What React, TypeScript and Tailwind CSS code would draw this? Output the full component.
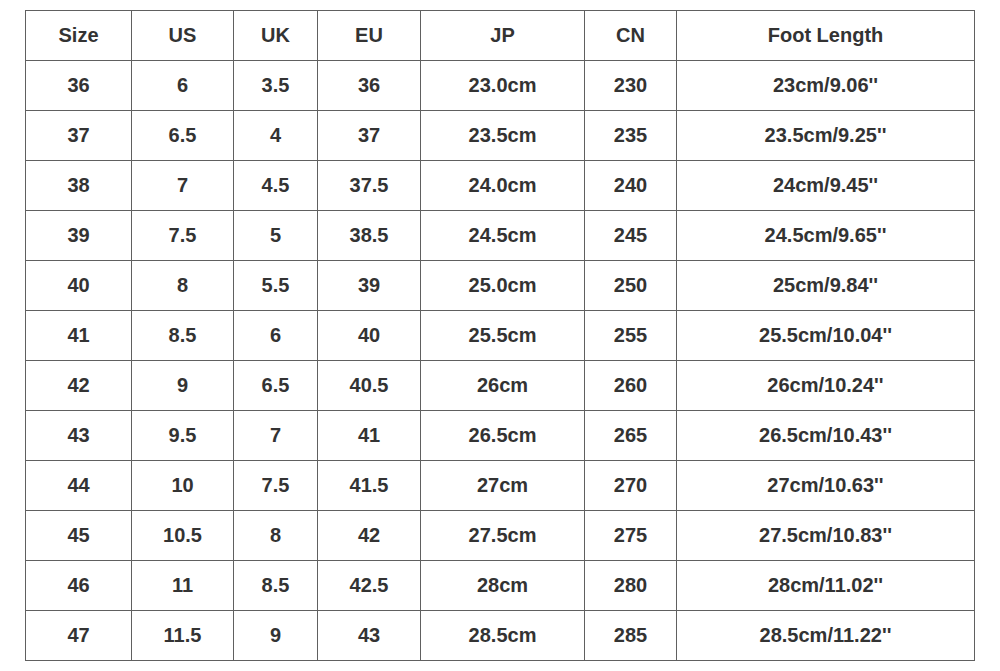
import React from "react";

const headers = ["Size", "US", "UK", "EU", "JP", "CN", "Foot Length"];
const widths = ["w-[106px]", "w-[102px]", "w-[84px]", "w-[103px]", "w-[164px]", "w-[92px]", "w-[298px]"];

const rows: string[][] = [
  ["36", "6", "3.5", "36", "23.0cm", "230", "23cm/9.06''"],
  ["37", "6.5", "4", "37", "23.5cm", "235", "23.5cm/9.25''"],
  ["38", "7", "4.5", "37.5", "24.0cm", "240", "24cm/9.45''"],
  ["39", "7.5", "5", "38.5", "24.5cm", "245", "24.5cm/9.65''"],
  ["40", "8", "5.5", "39", "25.0cm", "250", "25cm/9.84''"],
  ["41", "8.5", "6", "40", "25.5cm", "255", "25.5cm/10.04''"],
  ["42", "9", "6.5", "40.5", "26cm", "260", "26cm/10.24''"],
  ["43", "9.5", "7", "41", "26.5cm", "265", "26.5cm/10.43''"],
  ["44", "10", "7.5", "41.5", "27cm", "270", "27cm/10.63''"],
  ["45", "10.5", "8", "42", "27.5cm", "275", "27.5cm/10.83''"],
  ["46", "11", "8.5", "42.5", "28cm", "280", "28cm/11.02''"],
  ["47", "11.5", "9", "43", "28.5cm", "285", "28.5cm/11.22''"],
];

export default function App() {
  return (
    <div className="w-[1000px] h-[671px] bg-white pt-[10px] pl-[25px] font-['Liberation_Sans',Arial,sans-serif]">
      <table className="table-fixed border-collapse text-[20px] font-bold text-[#333]">
        <colgroup>
          {widths.map((w, i) => (
            <col key={i} className={w} />
          ))}
        </colgroup>
        <thead>
          <tr className="h-[50px]">
            {headers.map((h) => (
              <th key={h} className="border border-[#606060] text-center align-middle font-bold p-0 pb-[2px]">
                {h}
              </th>
            ))}
          </tr>
        </thead>
        <tbody>
          {rows.map((r, i) => (
            <tr key={i} className="h-[50px]">
              {r.map((c, j) => (
                <td key={j} className="border border-[#606060] text-center align-middle p-0 pb-[2px]">
                  {c}
                </td>
              ))}
            </tr>
          ))}
        </tbody>
      </table>
    </div>
  );
}
